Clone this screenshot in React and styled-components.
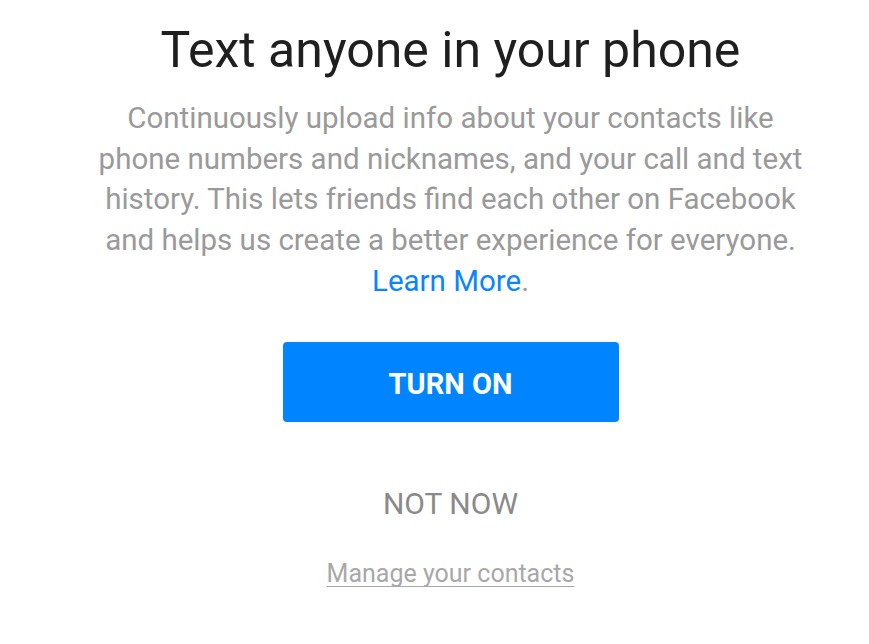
import React from 'react'
import styled, { createGlobalStyle } from 'styled-components'

const GlobalStyle = createGlobalStyle`
    body {
        margin: 0;
        background: #fff;
        font-family: 'Roboto', 'Liberation Sans', sans-serif;
    }
`;

const Page = styled.div`
    display: flex;
    flex-direction: column;
    align-items: center;
    width: 869px;
    height: 644px;
    padding: 20px 0 0 32px;
    box-sizing: border-box;
`;

const Title = styled.h1`
    margin: 0;
    font-size: 50px;
    font-weight: 400;
    line-height: 60px;
    color: #1f1f1f;
    white-space: nowrap;
`;

const Body = styled.p`
    margin: 18px 0 0;
    text-align: center;
    font-size: 29.5px;
    line-height: 40.7px;
    color: #9a9a9a;
    white-space: nowrap;
`;

const LearnMore = styled.a`
    color: #0a84ff;
    text-decoration: none;
`;

const PrimaryButton = styled.button`
    margin-top: 40px;
    width: 336px;
    height: 80px;
    padding: 4px 0 0;
    border: none;
    border-radius: 4px;
    background: #0084ff;
    color: #fff;
    font-family: inherit;
    font-size: 29px;
    font-weight: 700;
`;

const TextButton = styled.button`
    margin-top: 64px;
    border: none;
    background: none;
    padding: 0;
    font-family: inherit;
    font-size: 30px;
    color: #8a8a8a;
`;

const ManageLink = styled.a`
    margin-top: 38px;
    font-size: 25px;
    color: #a8a8a8;
    text-decoration: underline;
    text-decoration-skip-ink: none;
    text-decoration-thickness: 1px;
    text-underline-offset: 4px;
`;

export default function App() {
    return (
        <Page>
            <GlobalStyle />
            <Title>Text anyone in your phone</Title>
            <Body>
                Continuously upload info about your contacts like<br />
                phone numbers and nicknames, and your call and text<br />
                history. This lets friends find each other on Facebook<br />
                and helps us create a better experience for everyone.<br />
                <LearnMore>Learn More</LearnMore>.
            </Body>
            <PrimaryButton>TURN ON</PrimaryButton>
            <TextButton>NOT NOW</TextButton>
            <ManageLink>Manage your contacts</ManageLink>
        </Page>
    )
}
